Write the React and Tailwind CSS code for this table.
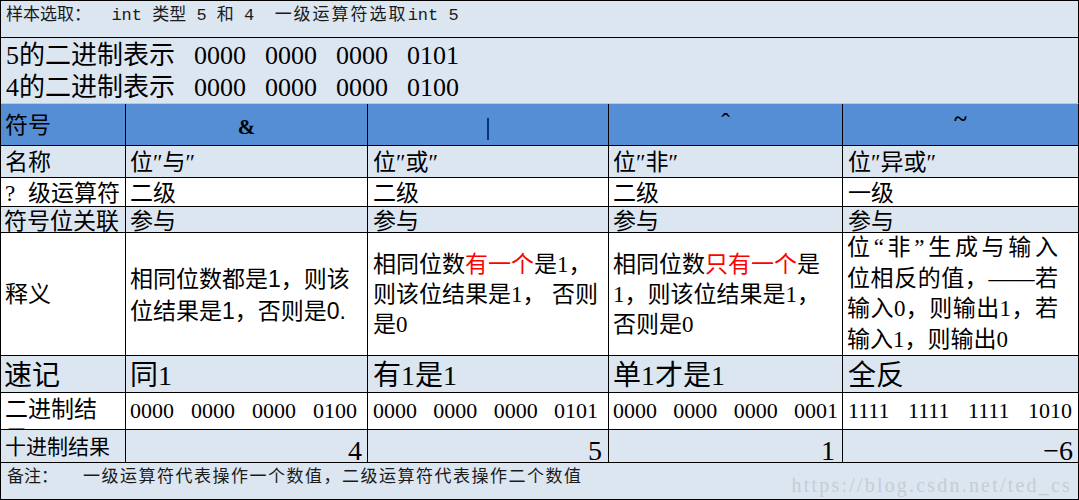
const SERIF = "font-['Liberation_Serif','Noto_Sans_CJK_SC',serif]";
const MONO = "font-['Liberation_Mono','Noto_Sans_CJK_SC',monospace]";
const SANS = "font-['Liberation_Sans','Noto_Sans_CJK_SC',sans-serif]";

const LIGHT = "bg-[#dce6f1]";
const BLUE = "bg-[#558ed5]";

function Cell({ className = "", children }) {
  return (
    <div className={`border-r border-b border-black overflow-hidden ${className}`}>
      {children}
    </div>
  );
}

function Bits({ value, className = "" }) {
  return (
    <div className={`flex justify-between w-full ${className}`}>
      {value.split(" ").map((g, i) => (
        <span key={i}>{g}</span>
      ))}
    </div>
  );
}

const Red = ({ children }) => <span className="text-[#ff0000]">{children}</span>;

export default function App() {
  return (
    <div
      className={`w-[1079px] h-[500px] grid grid-cols-[125px_242px_241px_234px_236px] grid-rows-[37px_66px_42px_32px_29px_26px_123px_37px_37px_33px_37px] border-l border-t border-black text-black ${SERIF}`}
    >
      {/* sample line */}
      <Cell className={`col-span-5 ${LIGHT} pl-[5px] pt-[6px] text-[17px] leading-none whitespace-pre text-[#1a1a1a] ${MONO}`}>
        样本选取：  int 类型 5 和 4  <span className="tracking-[2px]">一级运算符选取</span>int 5
      </Cell>

      {/* binary of 5 and 4 */}
      <div className={`col-span-5 ${LIGHT} border-r border-b border-b-[#b9c9dc] border-r-black pl-[5px] pt-[2px] text-[26px] leading-[32px]`}>
        <div className="flex gap-[19px]">
          <span>5的二进制表示</span>
          <span>0000</span>
          <span>0000</span>
          <span>0000</span>
          <span>0101</span>
        </div>
        <div className="flex gap-[19px]">
          <span>4的二进制表示</span>
          <span>0000</span>
          <span>0000</span>
          <span>0000</span>
          <span>0100</span>
        </div>
      </div>

      {/* header */}
      <Cell className={`${BLUE} flex items-center pl-[4px] pt-[2px] text-[23px] leading-none`}>符号</Cell>
      <Cell className={`${BLUE} flex items-center justify-center pt-[6px] text-[21px] font-bold leading-none`}>&amp;</Cell>
      <Cell className={`${BLUE} flex items-center justify-center pt-[3px] text-[25px] leading-none`}>|</Cell>
      <Cell className={`${BLUE} flex items-center justify-center text-[26px] leading-none`}>
        <span className="-translate-y-[2px]">ˆ</span>
      </Cell>
      <Cell className={`${BLUE} flex items-center justify-center text-[24px] font-bold leading-none`}>
        <span className="-translate-y-[7px]">~</span>
      </Cell>

      {/* name */}
      <Cell className={`${LIGHT} flex items-end pl-[4px] pb-[3px] text-[23px] leading-none`}>名称</Cell>
      <Cell className={`${LIGHT} flex items-end pl-[4px] pb-[3px] text-[23px] leading-none`}>位″与″</Cell>
      <Cell className={`${LIGHT} flex items-end pl-[5px] pb-[3px] text-[23px] leading-none`}>位″或″</Cell>
      <Cell className={`${LIGHT} flex items-end pl-[4px] pb-[3px] text-[23px] leading-none`}>位″非″</Cell>
      <Cell className={`${LIGHT} flex items-end pl-[5px] pb-[3px] text-[23px] leading-none`}>位″异或″</Cell>

      {/* level */}
      <Cell className="bg-white flex items-end pl-[4px] pb-[1px] text-[23px] leading-none whitespace-nowrap">
        <span className="inline-block w-[23px]">?</span>级运算符
      </Cell>
      <Cell className="bg-white flex items-end pl-[4px] pb-[1px] text-[23px] leading-none">二级</Cell>
      <Cell className="bg-white flex items-end pl-[5px] pb-[1px] text-[23px] leading-none">二级</Cell>
      <Cell className="bg-white flex items-end pl-[4px] pb-[1px] text-[23px] leading-none">二级</Cell>
      <Cell className="bg-white flex items-end pl-[5px] pb-[1px] text-[23px] leading-none">一级</Cell>

      {/* sign bit */}
      <Cell className={`${LIGHT} flex items-end pl-[3px] text-[23px] leading-none whitespace-nowrap`}>
        <span className="translate-y-[1px]">符号位关联</span>
      </Cell>
      <Cell className={`${LIGHT} flex items-end pl-[4px] text-[23px] leading-none`}>
        <span className="translate-y-[1px]">参与</span>
      </Cell>
      <Cell className={`${LIGHT} flex items-end pl-[5px] text-[23px] leading-none`}>
        <span className="translate-y-[1px]">参与</span>
      </Cell>
      <Cell className={`${LIGHT} flex items-end pl-[4px] text-[23px] leading-none`}>
        <span className="translate-y-[1px]">参与</span>
      </Cell>
      <Cell className={`${LIGHT} flex items-end pl-[5px] text-[23px] leading-none`}>
        <span className="translate-y-[1px]">参与</span>
      </Cell>

      {/* meaning */}
      <Cell className="bg-white flex items-center pl-[4px] text-[23px] leading-none">释义</Cell>
      <Cell className={`bg-white flex flex-col justify-center pl-[4px] pr-[8px] pt-[2px] text-[23px] leading-[32px] ${SANS}`}>
        <div className="whitespace-nowrap">相同位数都是1，则该</div>
        <div className="whitespace-nowrap">位结果是1，否则是0.</div>
      </Cell>
      <Cell className="bg-white flex flex-col justify-center pl-[5px] pr-[10px] pt-[2px] text-[23px] leading-[30px]">
        <div className="whitespace-nowrap">
          相同位数<Red>有一个</Red>是1，
        </div>
        <div className="flex justify-between whitespace-nowrap">
          <span>则该位结果是1，</span>
          <span>否则</span>
        </div>
        <div>是0</div>
      </Cell>
      <Cell className="bg-white flex flex-col justify-center pl-[4px] pr-[8px] pt-[2px] text-[23px] leading-[30px]">
        <div className="whitespace-nowrap">
          相同位数<Red>只有一个</Red>是
        </div>
        <div className="whitespace-nowrap">1，则该位结果是1，</div>
        <div>否则是0</div>
      </Cell>
      <Cell className="bg-white flex flex-col justify-center pl-[4px] pr-[20px] text-[23px] leading-[30.5px]">
        <div className="text-justify [text-align-last:justify] whitespace-nowrap">位“非”生成与输入</div>
        <div className="text-justify [text-align-last:justify] whitespace-nowrap">位相反的值，——若</div>
        <div className="text-justify [text-align-last:justify] whitespace-nowrap">输入0，则输出1，若</div>
        <div className="whitespace-nowrap">输入1，则输出0</div>
      </Cell>

      {/* quick memo */}
      <Cell className={`${LIGHT} flex items-end pl-[3px] pb-[2px] text-[28px] leading-none`}>速记</Cell>
      <Cell className={`${LIGHT} flex items-end pl-[4px] pb-[2px] text-[28px] leading-none`}>同1</Cell>
      <Cell className={`${LIGHT} flex items-end pl-[5px] pb-[2px] text-[28px] leading-none`}>有1是1</Cell>
      <Cell className={`${LIGHT} flex items-end pl-[4px] pb-[2px] text-[28px] leading-none`}>单1才是1</Cell>
      <Cell className={`${LIGHT} flex items-end pl-[5px] pb-[2px] text-[28px] leading-none`}>全反</Cell>

      {/* binary result */}
      <Cell className="bg-white pl-[4px] pt-[2px] text-[23px] leading-[30px]">
        二进制结
        <br />果
      </Cell>
      <Cell className="bg-white flex items-center pl-[4px] pr-[10px] text-[22px] leading-none">
        <Bits value="0000 0000 0000 0100" />
      </Cell>
      <Cell className="bg-white flex items-center pl-[5px] pr-[10px] text-[22px] leading-none">
        <Bits value="0000 0000 0000 0101" />
      </Cell>
      <Cell className="bg-white flex items-center pl-[4px] pr-[4px] text-[22px] leading-none">
        <Bits value="0000 0000 0000 0001" />
      </Cell>
      <Cell className="bg-white flex items-center pl-[5px] pr-[6px] text-[22px] leading-none">
        <Bits value="1111 1111 1111 1010" />
      </Cell>

      {/* decimal result */}
      <Cell className={`${LIGHT} flex items-center pl-[4px] pt-[2px] text-[21px] leading-none`}>十进制结果</Cell>
      <Cell className={`${LIGHT} flex items-end justify-end pr-[5px] text-[28px] leading-none`}>
        <span className="translate-y-[3px]">4</span>
      </Cell>
      <Cell className={`${LIGHT} flex items-end justify-end pr-[6px] text-[28px] leading-none`}>
        <span className="translate-y-[3px]">5</span>
      </Cell>
      <Cell className={`${LIGHT} flex items-end justify-end pr-[7px] text-[28px] leading-none`}>
        <span className="translate-y-[3px]">1</span>
      </Cell>
      <Cell className={`${LIGHT} flex items-end justify-end pr-[5px] text-[28px] leading-none`}>
        <span className="translate-y-[3px]">−6</span>
      </Cell>

      {/* note */}
      <Cell className={`col-span-5 ${LIGHT} flex items-start pl-[6px] pr-[6px] pt-[6px] text-[17px] leading-none text-[#1a1a1a] whitespace-pre ${MONO}`}>
        <span className="mr-[25px]">备注：</span>
        <span className="tracking-[1.5px]">一级运算符代表操作一个数值，二级运算符代表操作二个数值</span>
        <span className={`ml-auto mt-[6px] text-[20px] tracking-[2.2px] text-[#c6ccd4] ${SERIF}`}>
          https://blog.csdn.net/ted_cs
        </span>
      </Cell>
    </div>
  );
}
